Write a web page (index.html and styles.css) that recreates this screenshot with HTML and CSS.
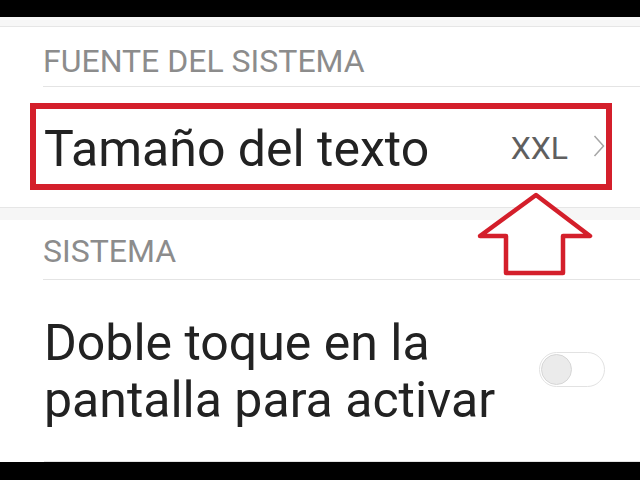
FILE: index.html
```html
<!DOCTYPE html>
<html lang="es">
<head>
<meta charset="utf-8">
<link rel="stylesheet" href="styles.css">
</head>
<body>
<div class="screen">
  <div class="topbar"></div>
  <div class="strip"></div>
  <div class="header header-font"><span>FUENTE DEL SISTEMA</span></div>
  <div class="row row-size">
    <span class="title">Tamaño del texto</span>
    <span class="value">XXL</span>
    <svg class="chev" width="12" height="22" viewBox="0 0 12 22"><path d="M1.5 1 L10.5 11 L1.5 21" fill="none" stroke="#a6a6a6" stroke-width="1.5"/></svg>
  </div>
  <div class="band"></div>
  <div class="header header-sys"><span>SISTEMA</span></div>
  <div class="row row-tap">
    <span class="title">Doble toque en la<br>pantalla para activar</span>
    <div class="toggle"><div class="knob"></div></div>
  </div>
  <div class="bottombar"></div>

  <div class="redbox"></div>
  <svg class="arrow" width="120" height="86" viewBox="0 0 120 86">
    <path d="M60 3 L114 44 L87 44 L87 81 L30 81 L30 44 L4 44 Z" fill="#fff" stroke="#d41f2b" stroke-width="4.5" stroke-linejoin="round"/>
  </svg>
</div>
</body>
</html>
```
FILE: styles.css
```css
html, body {
  margin: 0;
  padding: 0;
  background: #000;
}
.screen {
  position: relative;
  width: 640px;
  height: 480px;
  background: #fff;
  font-family: Roboto, "Liberation Sans", sans-serif;
  display: flex;
  flex-direction: column;
  overflow: hidden;
}
.topbar {
  height: 17px;
  background: #000;
  flex: none;
}
.strip {
  height: 9px;
  background: #f7f7f7;
  border-bottom: 1px solid #e6e6e6;
  flex: none;
}
.header {
  margin-left: 43px;
  height: 59px;
  border-bottom: 1px solid #e4e4e4;
  display: flex;
  align-items: center;
  color: #8c8c8c;
  font-size: 32px;
  flex: none;
}
.header-font span {
  margin-top: 8px;
}
.header-sys span {
  margin-top: 2px;
}
.row {
  display: flex;
  align-items: center;
  margin-left: 44px;
  padding-right: 35px;
  flex: none;
}
.row-size {
  height: 120px;
}
.title {
  color: #222;
  font-size: 50px;
  flex: 1;
}
.row-size .title {
  margin-top: 3px;
}
.value {
  color: #5f5f5f;
  font-size: 32px;
  margin-right: 25px;
  margin-top: 2px;
}
.chev {
  margin-top: -2px;
}
.band {
  height: 12px;
  background: #f6f6f6;
  border-top: 1px solid #e6e6e6;
  flex: none;
}
.row-tap {
  height: 181px;
  border-bottom: 1px solid #e2e2e2;
}
.row-tap .title {
  line-height: 57px;
  margin-top: 2px;
}
.toggle {
  width: 64px;
  height: 33px;
  border: 1px solid #e2e2e2;
  border-radius: 18px;
  background: #fff;
  position: relative;
  margin-top: -2px;
}
.knob {
  position: absolute;
  left: 1px;
  top: 1px;
  width: 29px;
  height: 29px;
  border-radius: 50%;
  background: #ebebeb;
  border: 1px solid #d6d6d6;
}
.bottombar {
  flex: 1;
  background: #000;
}
.redbox {
  position: absolute;
  left: 30px;
  top: 103px;
  width: 570px;
  height: 75px;
  border: 6px solid #d41f2b;
}
.arrow {
  position: absolute;
  left: 476px;
  top: 192px;
}
```
